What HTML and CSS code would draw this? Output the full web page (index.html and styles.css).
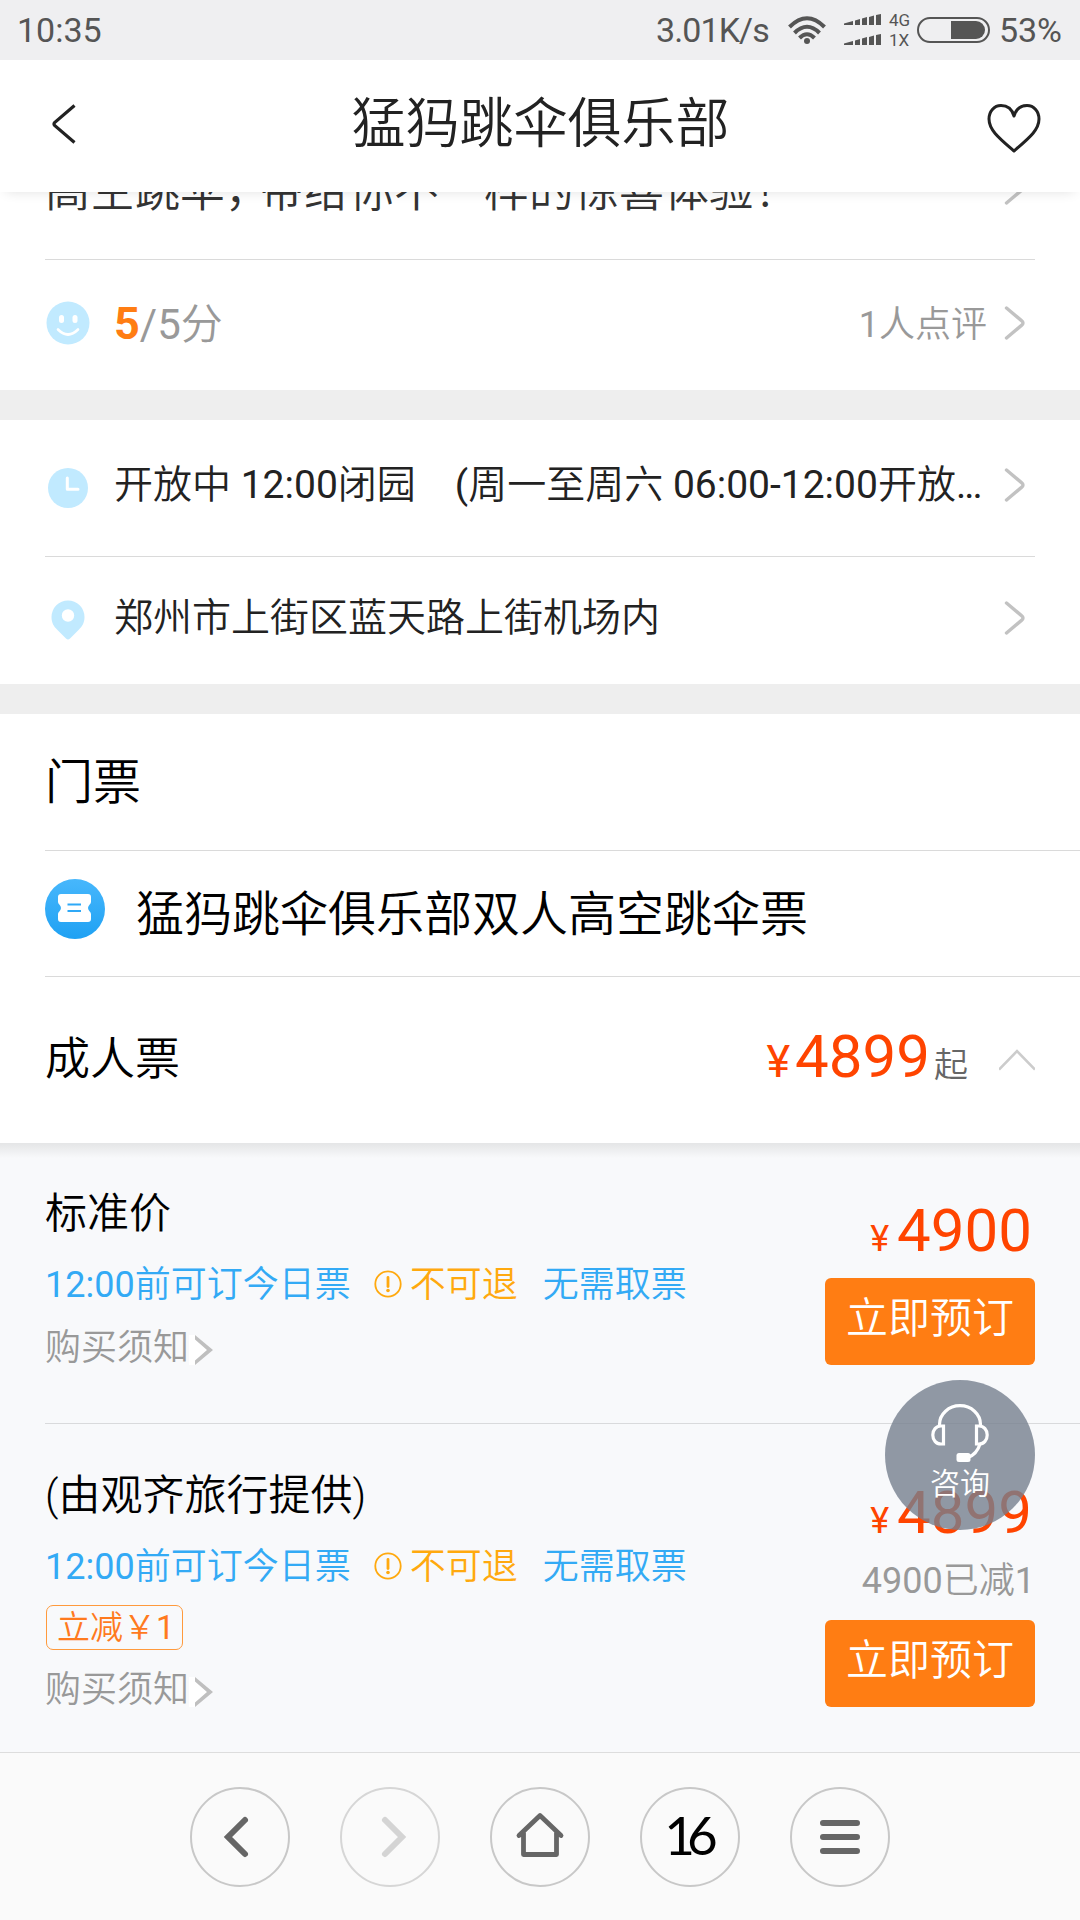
FILE: index.html
```html
<!DOCTYPE html>
<html lang="zh-CN">
<head>
<meta charset="utf-8">
<title>猛犸跳伞俱乐部</title>
<link rel="stylesheet" href="styles.css">
</head>
<body>
<svg class="defs" width="0" height="0">
  <symbol id="chev" viewBox="0 0 22 34"><path d="M2.5 2 L17.5 14.6 Q20.5 17 17.5 19.4 L2.5 32" fill="none" stroke="#c2c2c2" stroke-width="3.4" stroke-linecap="round"/></symbol>
  <symbol id="notechev" viewBox="0 0 24 32"><path d="M0 1H6L22 16 6 31H0Z" fill="#fff"/><path d="M6 1L24 16 6 31V26.5L18 16 6 5.500Z" fill="#bfbfbf"/></symbol>
  <symbol id="warn" viewBox="0 0 28 28"><circle cx="14" cy="14" r="12.7" fill="none" stroke="#ffa90e" stroke-width="1.8"/><path d="M14 7.500V16.500" stroke="#ffa90e" stroke-width="2.800" stroke-linecap="round"/><circle cx="14" cy="20.500" r="1.800" fill="#ffa90e"/></symbol>
</svg>
<div class="screen">
  <div class="status">
    <span class="time">10:35</span>
    <span class="speed">3.01K/s</span>
    <svg class="wifi" width="38" height="28" viewBox="0 0 38 28"><g fill="none" stroke="#555" stroke-width="4"><path d="M1.500 11Q19 -6.500 36.500 11"/><path d="M6.500 17Q19 4.500 31.500 17"/><path d="M11.500 22Q19 14.500 26.500 22"/></g><circle cx="19" cy="25" r="3" fill="#555"/></svg>
    <svg class="signal" width="37" height="32" viewBox="0 0 37 32"><g fill="#555"><path id="bars" d="M0 9.500L9 7V11H0ZM11 6.500L16 5V11H11ZM18 4.500L23 3V11H18ZM25 3L30 1.500V11H25ZM32 1L37 0V11H32Z"/><use href="#bars" y="20"/></g></svg>
    <span class="net"><span>4G</span><span>1X</span></span>
    <svg class="battery" width="73" height="28" viewBox="0 0 73 28"><rect x="1" y="2" width="71" height="24" rx="12" fill="none" stroke="#555" stroke-width="2"/><path d="M34 5H59A9 9 0 0 1 59 23H34Z" fill="#555"/></svg>
    <span class="percent">53%</span>
  </div>
  <div class="header">
    <svg class="back" width="26" height="42" viewBox="0 0 26 42"><path d="M23.500 2.500L3.600 19.500Q2.400 21 3.600 22.500L23.500 39.500" fill="none" stroke="#222" stroke-width="3.200"/></svg>
    <h1>猛犸跳伞俱乐部</h1>
    <svg class="heart" width="54" height="50" viewBox="0 0 54 50"><path d="M27 13C25 6 20 2.500 14 2.500C7 2.500 2 8.500 2 16C2 27 12 35 27 48C42 35 52 27 52 16C52 8.500 47 2.500 40 2.500C34 2.500 29 6 27 13Z" fill="none" stroke="#222" stroke-width="3" stroke-linejoin="round"/></svg>
  </div>

  <div class="content">
    <div class="row intro">
      <p>高空跳伞<span class="comma">，</span>带给你不一样的惊喜体验！</p>
      <svg class="chev"><use href="#chev"/></svg>
    </div>
    <div class="row score">
      <span class="ico"><svg width="44" height="44" viewBox="0 0 44 44"><circle cx="22" cy="22" r="21.500" fill="#c1eaff"/><rect x="13" y="14" width="5" height="8" rx="2.500" fill="#fff"/><rect x="26.500" y="14" width="5" height="8" rx="2.500" fill="#fff"/><path d="M12 28.500Q22 38.500 32 28.500" fill="none" stroke="#fff" stroke-width="2.600" stroke-linecap="round"/></svg></span>
      <p><b>5</b><span class="n">/5</span>分</p>
      <span class="reviews"><span class="n">1</span>人点评</span>
      <svg class="chev"><use href="#chev"/></svg>
    </div>
    <div class="band"></div>
    <div class="row hours">
      <span class="ico"><svg width="40" height="40" viewBox="0 0 40 40"><circle cx="20" cy="20" r="20" fill="#c1eaff"/><path d="M19.300 10V21.200H30" fill="none" stroke="#fff" stroke-width="3" stroke-linecap="round" stroke-linejoin="round"/></svg></span>
      <p>开放中<span class="n"> 12:00</span>闭园　<span class="n">(</span>周一至周六<span class="n"> 06:00-12:00</span>开放<span class="n dots">...</span></p>
      <svg class="chev"><use href="#chev"/></svg>
    </div>
    <div class="row address">
      <span class="ico"><svg width="34" height="40" viewBox="0 0 34 40"><path fill-rule="evenodd" d="M17 .5A16.500 16.500 0 0 1 33.500 17C33.500 23 31 26.500 28 29.500L19 38.500Q17 40.500 15 38.500L6 29.500C3 26.500 .5 23 .5 17A16.500 16.500 0 0 1 17 .5ZM17 9.300A6.200 6.200 0 1 0 17 21.700A6.200 6.200 0 1 0 17 9.300Z" fill="#c1eaff"/></svg></span>
      <p>郑州市上街区蓝天路上街机场内</p>
      <svg class="chev"><use href="#chev"/></svg>
    </div>
    <div class="band"></div>

    <h2 class="row full tickets">门票</h2>
    <div class="row full product">
      <svg class="badge" width="60" height="60" viewBox="0 0 60 60"><defs><linearGradient id="blue" x2="0" y2="1"><stop stop-color="#47b7fc"/><stop offset="1" stop-color="#1fa1f3"/></linearGradient></defs><circle cx="30" cy="30" r="30" fill="url(#blue)"/><path d="M16 15H43Q46 15 46 18V23C46 25 43 26.500 43 29S46 33 46 35V40Q46 43 43 43H16Q13 43 13 40V35C13 33 16 31.500 16 29S13 25 13 23V18Q13 15 16 15Z" fill="#fff"/><path d="M22.500 25.500H36M22.500 32H36" stroke="#2fa9f7" stroke-width="2.200"/></svg>
      <p>猛犸跳伞俱乐部双人高空跳伞票</p>
    </div>
    <div class="row adult">
      <p>成人票</p>
      <span class="price"><i>¥</i>4899</span><span class="from">起</span>
      <svg class="up" width="36" height="24" viewBox="0 0 36 24"><path d="M0 21.500L18 3L36 21.500" fill="none" stroke="#ccc" stroke-width="2.600"/></svg>
    </div>

    <div class="offers">
      <div class="offer">
        <div class="info">
          <h3>标准价</h3>
          <div class="tags"><span class="today"><span class="n">12:00</span>前可订今日票</span><svg class="warn"><use href="#warn"/></svg><span class="norefund">不可退</span><span>无需取票</span></div>
          <div class="note">购买须知<svg><use href="#notechev"/></svg></div>
        </div>
        <div class="buy">
          <span class="price"><i>¥</i>4900</span>
          <span class="btn">立即预订</span>
        </div>
      </div>
      <div class="offer second">
        <div class="info">
          <h3>(由观齐旅行提供)</h3>
          <div class="tags"><span class="today"><span class="n">12:00</span>前可订今日票</span><svg class="warn"><use href="#warn"/></svg><span class="norefund">不可退</span><span>无需取票</span></div>
          <div class="coupon">立减￥<span class="n">1</span></div>
          <div class="note">购买须知<svg><use href="#notechev"/></svg></div>
        </div>
        <div class="buy">
          <span class="price"><i>¥</i>4899</span>
          <span class="discount"><span class="n">4900</span>已减<span class="n">1</span></span>
          <span class="btn">立即预订</span>
        </div>
      </div>
    </div>
  </div>

  <div class="navbar">
    <span><svg width="100" height="100" viewBox="0 0 100 100"><path d="M55 33L38 50L55 67" fill="none" stroke="#666" stroke-width="6" stroke-linecap="round"/></svg></span>
    <span class="off"><svg width="100" height="100" viewBox="0 0 100 100"><path d="M45 33L62 50L45 67" fill="none" stroke="#d4d4d4" stroke-width="6" stroke-linecap="round"/></svg></span>
    <span><svg width="100" height="100" viewBox="0 0 100 100"><path d="M29 48.500L50 28.500L71 48.500M33.500 46V67.500H66.500V46" fill="none" stroke="#666" stroke-width="4.800" stroke-linecap="round" stroke-linejoin="round"/></svg></span>
    <span class="count">16</span>
    <span><svg width="100" height="100" viewBox="0 0 100 100"><path d="M33 36H67M33 50H67M33 64H67" stroke="#666" stroke-width="6" stroke-linecap="round"/></svg></span>
  </div>

  <div class="consult">
    <svg width="58" height="58" viewBox="0 0 58 58"><g fill="none" stroke="#fff" stroke-width="3.200"><path d="M8.500 21.500V20.500A20.500 18.800 0 0 1 49.500 20.500V21.500"/><path d="M12.500 22H10C5 22 1.800 26 1.800 31S5 40 10 40H12.500ZM45.500 22H48C53 22 56.200 26 56.200 31S53 40 48 40H45.500Z"/><path d="M49 40Q46 50 37 53.500"/></g><rect x="25.500" y="49" width="14" height="9" rx="2.500" fill="#fff"/></svg>
    <span>咨询</span>
  </div>
</div>
</body>
</html>
```

FILE: styles.css
```css
* { box-sizing: border-box; margin: 0; padding: 0; }
body {
  width: 1080px; height: 1920px; overflow: hidden; background: #fff;
  font-family: Roboto, "Noto Sans CJK SC", sans-serif;
  font-weight: 400; color: #222;
}
svg { display: block; flex: none; }
i { font-style: normal; }
.n { font-weight: 400; }
.defs { position: absolute; }
.screen { position: relative; width: 1080px; height: 1920px; overflow: hidden; display: flex; flex-direction: column; }

.status {
  flex: none; height: 60px; background: #efeff1; color: #555; font-size: 34px; line-height: 60px;
  display: flex; align-items: center; padding: 0 18px 0 17px; position: relative; z-index: 3;
}
.speed { margin-left: auto; letter-spacing: -.9px; }
.wifi { margin-left: 19px; }
.signal { margin-left: 18px; }
.net { margin-left: 8px; width: 28px; font-size: 17px; line-height: 20px; display: flex; flex-direction: column; }
.percent { margin-left: 9px; font-size: 34px; letter-spacing: 0; }

.header {
  flex: none; height: 132px; background: #fff; display: flex; align-items: center; justify-content: space-between;
  padding: 0 39px 0 51px; position: relative; z-index: 2; box-shadow: 0 5px 12px -6px rgba(0,0,0,.14);
}
.header h1 { font-size: 54px; font-weight: 350; line-height: 80px; padding-bottom: 3px; margin-left: 17px; }
.back { margin-bottom: 5px; }
.heart { margin-top: 4px; }

.content { flex: none; height: 1635px; margin-top: -75px; }
.row { display: flex; align-items: center; margin: 0 45px; border-bottom: 1px solid #dadada; font-weight: 350; line-height: 60px; }
.row.full { margin-right: 0; }
.row p { flex: 1; white-space: nowrap; }
.chev { width: 22px; height: 34px; margin-right: 9px; }
.ico { width: 69px; padding-right: 24px; display: flex; justify-content: center; }
.intro { height: 143px; font-size: 45px; color: #333; }
.intro p { padding-top: 7px; }
.comma { letter-spacing: -11px; }
.score { height: 130px; border: 0; padding-bottom: 4px; color: #999; font-size: 42px; }
.score p, .reviews { padding-top: 3px; }
.score b { color: #ff7d13; font-size: 45px; line-height: 1; font-weight: 700; }
.reviews { font-size: 36px; margin-right: 17px; }
.band { height: 30px; background: #eee; }
.hours { height: 137px; font-size: 39px; }
.hours p, .hours .chev, .address p, .address .chev { margin-bottom: 6px; }
.dots { letter-spacing: -2px; }
.address { height: 127px; border: 0; font-size: 39px; }
.address .ico { padding-bottom: 2px; }
.tickets { height: 137px; font-size: 48px; color: #000; padding-top: 2px; }
.product { height: 126px; font-size: 48px; color: #000; }
.product .badge { margin: 0 31px 9px 0; }
.product p { padding-top: 3px; }
.adult { height: 166px; border: 0; font-size: 45px; color: #000; }
.price { color: #ff4400; font-size: 60px; line-height: 70px; font-weight: 400; white-space: nowrap; }
.price i { font-size: 45px; line-height: 1; margin-right: 5px; }
.adult .price { margin-bottom: 6px; }
.from { font-size: 34px; color: #666; margin: 10px 31px 0 4px; }

.offers { background: linear-gradient(#e4e5e6, #f8f9fb 15px); }
.offer { margin-left: 45px; padding-right: 45px; height: 281px; padding-top: 41px; border-bottom: 1px solid #d9dadc; display: flex; justify-content: space-between; }
.offer.second { height: 328px; padding-top: 42px; border: 0; }
h3 { font-size: 42px; line-height: 60px; font-weight: 350; color: #000; }
.tags { margin-top: 15px; font-size: 36px; line-height: 52px; color: #33aaf5; font-weight: 350; display: flex; align-items: center; }
.warn { width: 28px; height: 28px; margin: 0 8px 3px 23px; }
.norefund { color: #ffa90e; margin-right: 25px; }
.note { display: flex; align-items: center; margin-top: 7px; font-size: 36px; line-height: 60px; color: #999; font-weight: 350; }
.note svg { width: 24px; height: 32px; margin: 4px 0 0 0; }
.coupon { margin: 12px 0 -9px 1px; width: 137px; height: 45px; border: 1.500px solid #ff9a3c; border-radius: 7px; color: #ff7a1e; font-size: 33px; line-height: 43px; padding-left: 10px; font-weight: 350; white-space: nowrap; }
.coupon + .note { margin-top: 19px; }
.buy { display: flex; flex-direction: column; align-items: flex-end; padding-top: 12px; }
.buy .price { padding-right: 3px; }
.buy .price i { font-size: 36px; margin-right: 8px; }
.btn { margin-top: 12px; width: 210px; height: 87px; border-radius: 6px; background: #ff7d13; color: #fff; font-size: 42px; line-height: 81px; text-align: center; font-weight: 350; }
.discount { margin-top: 11px; font-size: 36px; line-height: 44px; color: #999; font-weight: 350; }
.discount + .btn { margin-top: 17px; }

.navbar { flex: none; height: 168px; border-top: 1px solid #ddd; background: #fafafa; display: flex; align-items: center; justify-content: center; gap: 50px; position: relative; }
.navbar span { width: 100px; height: 100px; border: 2px solid #c8c8c8; border-radius: 50%; display: flex; align-items: center; justify-content: center; }
.navbar .off { border-color: #d6d6d6; }
.navbar .count { font-family: Lato, sans-serif; font-size: 53px; line-height: 1; letter-spacing: -8px; color: #000; padding: 0 6px 4px 0; }

.consult { position: absolute; z-index: 4; left: 885px; top: 1380px; width: 150px; height: 150px; border-radius: 50%; background: rgba(118,128,142,.8); color: #fff; display: flex; flex-direction: column; align-items: center; padding-top: 24px; font-size: 30px; line-height: 44px; font-weight: 350; }
```
